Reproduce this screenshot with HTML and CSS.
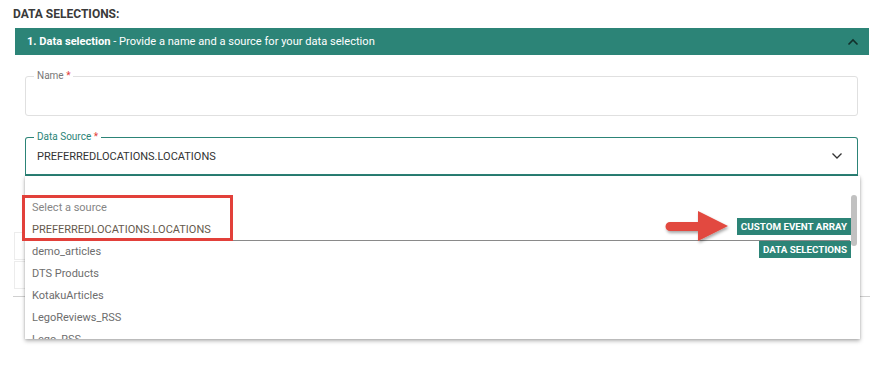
FILE: index.html
```html
<!DOCTYPE html>
<html lang="en">
<head>
    <meta charset="UTF-8">
    <meta name="viewport" content="width=device-width, initial-scale=1.0">
    <title>Data selections</title>
    <link rel="stylesheet" href="styles.css">
</head>
<body>
<div class="content">

    <h2 class="section-title">DATA SELECTIONS:</h2>

    <div class="panel">
        <div class="panel-head">
            <span><b>1. Data selection</b> - Provide a name and a source for your data selection</span>
            <svg class="chev" width="12" height="8" viewBox="0 0 12 8"><path d="M1.5 6.5 L6 2 L10.5 6.5" fill="none" stroke="#12302b" stroke-width="1.6"/></svg>
        </div>

        <div class="panel-body">
            <div class="field">
                <label class="field-label">Name <span class="req">*</span></label>
                <div class="field-box"></div>
            </div>

            <div class="field field-active">
                <label class="field-label">Data Source <span class="req">*</span></label>
                <div class="field-box select-box">
                    <span>PREFERREDLOCATIONS.LOCATIONS</span>
                    <svg width="12" height="8" viewBox="0 0 12 8"><path d="M1.5 1.5 L6 6 L10.5 1.5" fill="none" stroke="#333" stroke-width="1.3"/></svg>
                </div>

                <div class="dropdown">
                    <ul class="options">
                        <li class="muted">Select a source</li>
                        <li class="selected">PREFERREDLOCATIONS.LOCATIONS</li>
                        <li>demo_articles</li>
                        <li>DTS Products</li>
                        <li>KotakuArticles</li>
                        <li>LegoReviews_RSS</li>
                        <li>Lego_RSS</li>
                    </ul>
                    <div class="scroll-thumb"></div>

                    <div class="highlight"></div>
                    <svg class="arrow" width="70" height="38" viewBox="0 0 70 38">
                        <defs>
                            <filter id="sh" x="-20%" y="-30%" width="140%" height="160%">
                                <feDropShadow dx="1" dy="2" stdDeviation="1.5" flood-color="#000" flood-opacity="0.35"/>
                            </filter>
                        </defs>
                        <path filter="url(#sh)" d="M7 14 L35 14 L35 3 L65 18 L35 33 L35 23 L7 23 A4.5 4.5 0 0 1 7 14 Z" fill="#e24a3f"/>
                    </svg>
                    <span class="tag tag-one">CUSTOM EVENT ARRAY</span>
                    <span class="tag tag-two">DATA SELECTIONS</span>
                </div>
            </div>

            <div class="collapsed">
                <div class="collapsed-row"><svg width="10" height="6" viewBox="0 0 10 6"><path d="M1 5 L5 1 L9 5" fill="none" stroke="#bbb" stroke-width="1"/></svg></div>
                <div class="collapsed-row"><svg width="10" height="6" viewBox="0 0 10 6"><path d="M1 5 L5 1 L9 5" fill="none" stroke="#bbb" stroke-width="1"/></svg></div>
            </div>
        </div>
    </div>

    <hr class="divider">

</div>
</body>
</html>
```

FILE: styles.css
```css
html, body {
    margin: 0;
    font-family: Roboto, "Liberation Sans", sans-serif;
    color: #333;
    background: #fff;
}

body {
    min-height: 381px;
}

.content {
    padding: 7px 11px 0 13px;
}

.section-title {
    margin: 0 0 7px 0;
    font-size: 12px;
    font-weight: bold;
    color: #3a3a3a;
    line-height: 14px;
}

.panel {
    margin-left: 2px;
    width: 854px;
}

.panel-head {
    display: flex;
    justify-content: space-between;
    align-items: center;
    height: 27px;
    padding: 0 10px 0 12px;
    background-color: #2c8477;
    color: #fff;
    font-size: 11.1px;
}

.panel-head b {
    font-weight: bold;
}

.panel-body {
    padding: 21px 11px 0 10px;
}

.field {
    position: relative;
    margin-bottom: 21px;
}

.field-box {
    height: 38px;
    border: 1px solid #e0e0e0;
    border-radius: 3px;
}

.field-label {
    position: absolute;
    top: -6px;
    left: 9px;
    padding: 0 3px;
    background: #fff;
    font-size: 10px;
    line-height: 12px;
    color: #777;
}

.req {
    color: #e2403a;
}

.field-active {
    margin-bottom: 56px;
}

.field-active .field-label {
    color: #2c8477;
}

.select-box {
    display: flex;
    justify-content: space-between;
    align-items: center;
    height: 36px;
    padding: 0 14px 0 11px;
    border: 1px solid #2c8477;
    border-bottom-width: 2px;
    border-radius: 3px 3px 0 0;
    font-size: 11px;
    color: #333;
}

.dropdown {
    position: absolute;
    top: 39px;
    left: 0;
    right: -2px;
    height: 163px;
    background: #fff;
    box-shadow: 0 2px 4px rgba(0, 0, 0, 0.3), 0 0 2px rgba(0, 0, 0, 0.15);
    z-index: 2;
}

.options {
    list-style: none;
    margin: 0;
    padding: 21px 0 0 0;
    height: 142px;
    overflow: hidden;
}

.options li {
    padding-left: 7px;
    height: 22px;
    line-height: 22px;
    font-size: 11px;
    color: #6d6d6d;
}

.options .muted {
    color: #858585;
}

.options .selected {
    margin: 0 10px 0 3px;
    padding-left: 4px;
    height: 21px;
    border-bottom: 1px solid #8a8a8a;
    color: #66594c;
}

.scroll-thumb {
    position: absolute;
    top: 19px;
    right: 3px;
    width: 6px;
    height: 51px;
    border-radius: 3px;
    background: #c1c1c1;
}

.highlight {
    position: absolute;
    top: 19px;
    left: -3px;
    width: 205px;
    height: 40px;
    border: 3px solid #e2403a;
}

.arrow {
    position: absolute;
    top: 32px;
    left: 638px;
}

.tag {
    position: absolute;
    right: 9px;
    height: 17px;
    line-height: 17px;
    padding: 0 4px;
    background: #2c8477;
    color: #fff;
    font-size: 9.8px;
    font-weight: bold;
}

.tag-one {
    top: 42px;
}

.tag-two {
    top: 65px;
}

.collapsed {
    margin: 0 -1px 0 -11px;
}

.collapsed-row {
    display: flex;
    justify-content: flex-end;
    align-items: center;
    height: 26px;
    padding-right: 3px;
    border: 1px solid #ececec;
    margin-bottom: 1px;
}

.divider {
    margin: 7px 0 0 0;
    border: 0;
    border-top: 1px solid #d0d0d0;
    width: 857px;
}
```
